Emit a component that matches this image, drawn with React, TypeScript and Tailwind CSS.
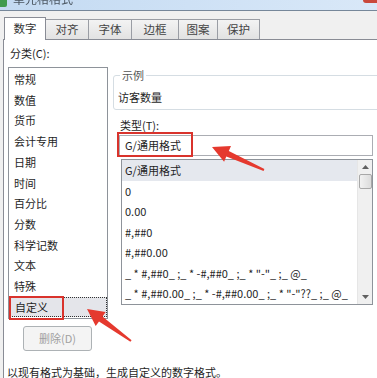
import React from 'react';

const FONT = { fontFamily: '"Noto Sans CJK SC", "Noto Sans", sans-serif' };

const categories = ['常规', '数值', '货币', '会计专用', '日期', '时间', '百分比', '分数', '科学记数', '文本', '特殊', '自定义'];

const formats = [
  'G/通用格式',
  '0',
  '0.00',
  '#,##0',
  '#,##0.00',
  '_ * #,##0_ ;_ * -#,##0_ ;_ * "-"_ ;_ @_',
  '_ * #,##0.00_ ;_ * -#,##0.00_ ;_ * "-"??_ ;_ @_',
];

const tabs = [
  { label: '数字', w: 'w-[42px]' },
  { label: '对齐', w: 'w-[44px]' },
  { label: '字体', w: 'w-[44px]' },
  { label: '边框', w: 'w-[48px]' },
  { label: '图案', w: 'w-[40px]' },
  { label: '保护', w: 'w-[43px]' },
];

type Pt = [number, number];

// tapered annotation arrow, tail -> tip
function arrowPoints(tail: Pt, tip: Pt, headLen = 17, headW = 17, tailW = 2, neckW = 6): string {
  const dx = tip[0] - tail[0];
  const dy = tip[1] - tail[1];
  const len = Math.hypot(dx, dy);
  const ux = dx / len;
  const uy = dy / len;
  const nx = -uy;
  const ny = ux;
  const bx = tip[0] - ux * headLen;
  const by = tip[1] - uy * headLen;
  const p = (x: number, y: number) => `${x.toFixed(1)},${y.toFixed(1)}`;
  return [
    p(tail[0] + (nx * tailW) / 2, tail[1] + (ny * tailW) / 2),
    p(bx + (nx * neckW) / 2, by + (ny * neckW) / 2),
    p(bx + (nx * headW) / 2, by + (ny * headW) / 2),
    p(tip[0], tip[1]),
    p(bx - (nx * headW) / 2, by - (ny * headW) / 2),
    p(bx - (nx * neckW) / 2, by - (ny * neckW) / 2),
    p(tail[0] - (nx * tailW) / 2, tail[1] - (ny * tailW) / 2),
  ].join(' ');
}

export default function App() {
  return (
    <div className="relative flex h-[378px] w-[377px] flex-col overflow-hidden bg-[#f0f0f0] text-[11px] text-[#1e1e1e]" style={FONT}>
      {/* Title bar (cropped) */}
      <div className="flex h-[11px] shrink-0 items-start border-b border-[#76879a] bg-gradient-to-r from-[#c3daf2] to-[#d9e8f8]">
        <div className="h-[7px] w-[7px] rounded-br-[2px] bg-[#3f9b4f]" />
        <span className="ml-[6px] -mt-[9px] text-[12px] leading-[16px] text-[#4a5560] blur-[0.7px]">单元格格式</span>
        <div className="ml-auto h-[3px] w-[14px] rounded-bl-[3px] bg-[#c9483b]" />
      </div>

      {/* Tabs */}
      <div className="flex h-[28px] shrink-0 items-end pl-[4px]">
        {tabs.map((t, i) =>
          i === 0 ? (
            <div
              key={t.label}
              className={`relative z-10 -mb-px flex h-[23px] ${t.w} items-center justify-center border border-b-0 border-[#898c95] bg-white text-[11.5px] text-[#333]`}
            >
              {t.label}
            </div>
          ) : (
            <div
              key={t.label}
              className={`-ml-px flex h-[20px] ${t.w} items-center justify-center border border-b-0 border-[#9a9da4] bg-gradient-to-b from-[#f3f3f3] to-[#e2e2e2] text-[11.5px] text-[#444]`}
            >
              {t.label}
            </div>
          ),
        )}
      </div>

      {/* Tab panel */}
      <div className="ml-[3px] flex flex-1 border-l border-t border-[#898c95] bg-white">
        {/* Left column */}
        <div className="flex w-[109px] shrink-0 flex-col pl-[4px] pt-[5px]">
          <div className="ml-[2px] leading-[16px]">分类(C):</div>
          <div className="mt-[6px] flex h-[252px] w-[100px] flex-col border border-[#8e939a] pt-px">
            {categories.map((c, i) => (
              <div
                key={c}
                className={`flex h-[20.7px] shrink-0 items-center pl-[5px] ${
                  i === categories.length - 1 ? 'border border-dotted border-[#333] bg-[#e4e5ea] pl-[4px]' : ''
                }`}
              >
                {c}
              </div>
            ))}
          </div>
          <div className="ml-[15px] mt-[7px] flex h-[25px] w-[69px] items-center justify-center rounded-[3px] border border-[#adb2b5] bg-[#f4f4f4] text-[#a0a0a0]">
            删除(D)
          </div>
          <div className="-ml-px mt-[13px] whitespace-nowrap leading-[16px]">以现有格式为基础，生成自定义的数字格式。</div>
        </div>

        {/* Right column */}
        <div className="flex flex-1 flex-col pt-[27px]">
          <fieldset className="w-[290px] rounded-[3px] border border-[#d5dde3] pb-[4px] pl-[4px]">
            <legend className="ml-[2px] px-[2px] leading-[16px] text-[#555]">示例</legend>
            <div className="mt-[6px] leading-[16px]">访客数量</div>
          </fieldset>
          <div className="ml-[7px] mt-[7px] leading-[16px]">类型(T):</div>
          <div className="ml-[6px] mt-[2px] flex h-[21px] w-[254px] items-center border border-[#abadb3] pl-[5px]">G/通用格式</div>
          <div className="ml-[8px] mt-[3px] flex h-[146px] w-[252px] border border-[#8e939a]">
            <div className="flex flex-1 flex-col">
              {formats.map((f, i) => (
                <div
                  key={f}
                  className={`flex h-[20.5px] shrink-0 items-center whitespace-pre pl-[3px] ${i === 0 ? 'bg-[#e5e8ee]' : ''}`}
                >
                  {f}
                </div>
              ))}
            </div>
            {/* Scrollbar */}
            <div className="flex w-[15px] flex-col items-center border-l border-[#e6e6e6] bg-[#f0f0f0]">
              <div className="flex h-[14px] items-center justify-center">
                <svg width="7" height="4" viewBox="0 0 7 4">
                  <polygon points="3.5,0 7,4 0,4" fill="#606060" />
                </svg>
              </div>
              <div className="h-[15px] w-[13px] rounded-[2px] border border-[#a8a8a8] bg-gradient-to-r from-[#f2f2f2] to-[#dcdcdc]" />
              <div className="flex-1" />
              <div className="flex h-[14px] items-center justify-center">
                <svg width="7" height="4" viewBox="0 0 7 4">
                  <polygon points="0,0 7,0 3.5,4" fill="#606060" />
                </svg>
              </div>
            </div>
          </div>
        </div>
      </div>

      {/* Red annotation boxes */}
      <div className="pointer-events-none absolute left-[9px] top-[296px] h-[24px] w-[55px] border-2 border-[#d9332c]" />
      <div className="pointer-events-none absolute left-[117px] top-[132px] h-[25px] w-[76px] border-2 border-[#d9332c]" />

      {/* Red annotation arrows */}
      <svg className="pointer-events-none absolute left-0 top-0" width="377" height="378" viewBox="0 0 377 378">
        <polygon points={arrowPoints([264, 170], [212, 147])} fill="#e5392e" />
        <polygon points={arrowPoints([131, 341], [87, 309])} fill="#e5392e" />
      </svg>
    </div>
  );
}
